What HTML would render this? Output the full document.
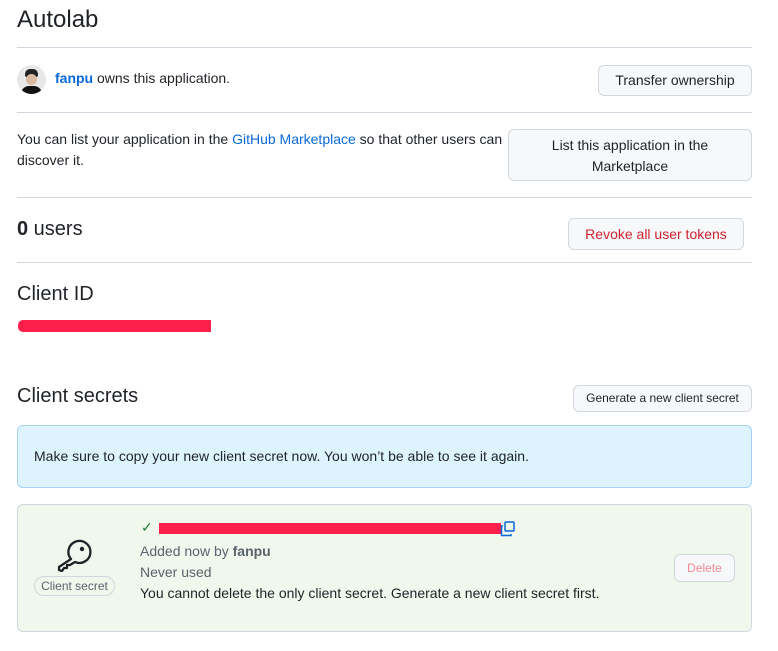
<!DOCTYPE html>
<html><head><style>
body{margin:0;width:778px;height:651px;background:#fff;font-family:"Liberation Sans",sans-serif;color:#1f2328;position:relative;overflow:hidden}
.a{position:absolute}
.hr{position:absolute;left:17px;width:735px;height:1px;background:#d0d7de}
.btn{position:absolute;background:#f6f8fa;border:1px solid #d0d7de;border-radius:6px;box-sizing:border-box;font-size:14px;text-align:center;color:#1f2328}
a{color:#0969da;text-decoration:none}
</style></head><body>
<div class="a" style="left:17px;top:6px;font-size:24px">Autolab</div>
<div class="hr" style="top:47px"></div>
<div class="a" style="left:17px;top:65px;width:29px;height:29px;border-radius:50%;background:#e8e8e8;overflow:hidden"><div style="position:absolute;left:8px;top:4px;width:13px;height:8px;background:#222;border-radius:5px 5px 2px 2px"></div><div style="position:absolute;left:9px;top:9px;width:11px;height:11px;background:#d9b9a0;border-radius:50%"></div><div style="position:absolute;left:4px;top:21px;width:21px;height:12px;background:#111;border-radius:8px 8px 0 0"></div></div>
<div class="a" style="left:55px;top:70px;font-size:14px"><b style="color:#0969da">fanpu</b> owns this application.</div>
<div class="btn" style="left:598px;top:65px;width:154px;height:31px;line-height:29px">Transfer ownership</div>
<div class="hr" style="top:112px"></div>
<div class="a" style="left:17px;top:129px;font-size:14px;line-height:21px;width:490px">You can list your application in the <a>GitHub Marketplace</a> so that other users can discover it.</div>
<div class="btn" style="left:508px;top:129px;width:244px;height:52px;padding-top:5px;line-height:21px">List this application in the<br>Marketplace</div>
<div class="hr" style="top:197px"></div>
<div class="a" style="left:17px;top:218px;font-size:20px"><b>0</b> users</div>
<div class="btn" style="left:568px;top:218px;width:176px;height:32px;line-height:30px;color:#cf222e">Revoke all user tokens</div>
<div class="hr" style="top:262px"></div>
<div class="a" style="left:17px;top:283px;font-size:20px">Client ID</div>
<div class="a" style="left:18px;top:320px;width:193px;height:12px;background:#ff1f4b;border-radius:5px 0 0 5px"></div>
<div class="a" style="left:17px;top:385px;font-size:20px">Client secrets</div>
<div class="btn" style="left:573px;top:385px;width:179px;height:27px;line-height:25px;font-size:12px">Generate a new client secret</div>
<div class="a" style="left:17px;top:425px;width:735px;height:63px;box-sizing:border-box;background:#ddf4ff;border:1px solid #a4d1f4;border-radius:6px;font-size:14px;padding:22px 0 0 16px">Make sure to copy your new client secret now. You won’t be able to see it again.</div>
<div class="a" style="left:17px;top:504px;width:735px;height:128px;box-sizing:border-box;background:#f0f7ec;border:1px solid #d0d7de;border-radius:6px"></div>
<svg class="a" style="left:56px;top:539px" width="38" height="36" viewBox="0 0 38 36" fill="none" stroke="#1f2328" stroke-width="2.3" stroke-linejoin="round"><path d="M15 20 L3 28 L3 31 L6 32 L8 29 L11 29 L11 26 L14 26 L19 23 A11 11 0 1 0 15 20Z"/><circle cx="26" cy="10" r="2.2" fill="#1f2328" stroke="none"/></svg>
<div class="a" style="left:34px;top:576px;width:81px;height:20px;box-sizing:border-box;border:1px solid #d0d7de;border-radius:10px;font-size:12px;color:#59636e;text-align:center;line-height:18px">Client secret</div>
<div class="a" style="left:141px;top:519px;color:#1a7f37;font-size:14px">✓</div>
<div class="a" style="left:159px;top:523px;width:342px;height:11px;background:#ff1f4b"></div>
<svg class="a" style="left:500px;top:521px" width="16" height="16" viewBox="0 0 16 16" fill="none" stroke="#0969da" stroke-width="1.5"><rect x="5" y="1" width="9" height="9" rx="1"/><path d="M3 5H1.5V14.5H11V13"/></svg>
<div class="a" style="left:140px;top:541px;font-size:14px;line-height:21px;color:#59636e">Added now by <b>fanpu</b><br>Never used<br><span style="color:#1f2328">You cannot delete the only client secret. Generate a new client secret first.</span></div>
<div class="btn" style="left:674px;top:554px;width:61px;height:28px;line-height:26px;font-size:12px;color:#f08a91;background:#f6f8fa">Delete</div>
</body></html>
